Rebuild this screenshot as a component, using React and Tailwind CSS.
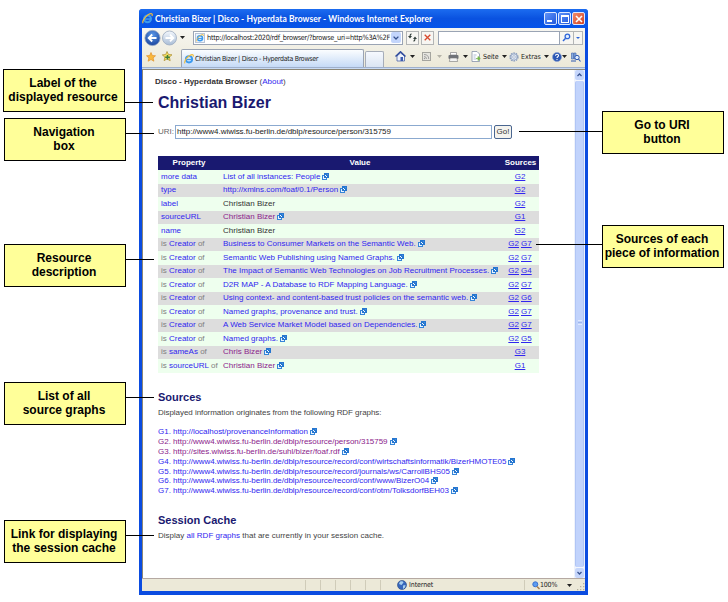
import React from 'react';

const link = 'text-[#3026f0]';
const visited = 'text-[#8b238b]';

function Ext() {
  return (
    <svg className="mb-px ml-[2px] inline-block shrink-0" width="7" height="7" viewBox="0 0 7 7">
      <rect x="0.5" y="2.5" width="4" height="4" fill="#eaf4ff" stroke="#3585d8" />
      <rect x="2.500" y="0.500" width="4" height="4" fill="#fff" stroke="#2576d0" />
      <path d="M3 1.500h2.500V4M5.300 1.700L2.600 4.400" stroke="#2576d0" strokeWidth="1" fill="none" />
    </svg>
  );
}

function Tri({ className = '' }) {
  return (
    <svg className={'shrink-0 ' + className} width="5" height="3" viewBox="0 0 5 3">
      <path d="M0 0h5L2.5 3z" fill="currentColor" />
    </svg>
  );
}

function IELogo({ size = 10 }) {
  return (
    <svg width={size} height={size} viewBox="0 0 12 12" className="shrink-0">
      <circle cx="6" cy="6.4" r="3.8" fill="none" stroke="#3b9af0" strokeWidth="2.200" />
      <path d="M3 6.6h6.8" stroke="#3b9af0" strokeWidth="1.6" />
      <path d="M1.2 11.2C-.8 8.500 6.500 .2 10.500 .8c1 .3.8 1.500.3 2.400" fill="none" stroke="#f2bd3a" strokeWidth="1.300" />
    </svg>
  );
}

function TitleBar() {
  const btn = 'flex h-[13px] w-[13px] items-center justify-center rounded-[2px] border border-[#dce8ff]';
  return (
    <div className="flex h-[19px] items-center rounded-t-[3px] bg-linear-to-b from-[#1c6cf0] via-[#0a52e0] to-[#0654ea] pr-[3px] pl-[3px]">
      <IELogo size={11} />
      <div className="ml-[2px] flex-1 whitespace-nowrap font-['Lato',sans-serif] text-[8.5px] leading-[12px] font-bold tracking-[0.06px] text-white">
        Christian Bizer | Disco - Hyperdata Browser - Windows Internet Explorer
      </div>
      <div className="flex gap-[1px]">
        <div className={btn + ' bg-linear-to-br from-[#5f92f8] to-[#2158dc]'}>
          <div className="mt-[5px] mr-[3px] h-[2px] w-[5px] bg-white" />
        </div>
        <div className={btn + ' bg-linear-to-br from-[#5f92f8] to-[#2158dc]'}>
          <div className="h-[8px] w-[8px] border border-t-2 border-white" />
        </div>
        <div className={btn + ' bg-linear-to-br from-[#ee8a6a] to-[#d4401c]'}>
          <svg width="8" height="8" viewBox="0 0 8 8">
            <path d="M1 1l6 6M7 1L1 7" stroke="#fff" strokeWidth="1.600" />
          </svg>
        </div>
      </div>
    </div>
  );
}

function NavRow() {
  return (
    <div className="flex h-[19px] items-center pl-[2px]">
      <svg width="35" height="18" viewBox="0 0 35 18" className="shrink-0">
        <defs>
          <radialGradient id="back" cx="0.5" cy="0.3" r="0.8">
            <stop offset="0" stopColor="#5b98e8" />
            <stop offset="1" stopColor="#123a94" />
          </radialGradient>
          <linearGradient id="fwd" x1="0" y1="0" x2="0" y2="1">
            <stop offset="0" stopColor="#f4f8fd" />
            <stop offset="1" stopColor="#a9bdd6" />
          </linearGradient>
        </defs>
        <circle cx="8.500" cy="9" r="7.600" fill="url(#back)" stroke="#8fa3c4" strokeWidth="0.8" />
        <path d="M12.500 9H5M8.200 5.500L4.700 9l3.500 3.500" stroke="#fff" strokeWidth="1.900" fill="none" />
        <circle cx="25.500" cy="9" r="7" fill="url(#fwd)" stroke="#9aa9bf" strokeWidth="0.8" />
        <path d="M21.500 9H29M26 5.700L29.300 9 26 12.300" stroke="#fff" strokeWidth="1.900" fill="none" />
      </svg>
      <Tri className="ml-[1px] text-[#222]" />
      <div className="ml-[8px] flex h-[14px] w-[210px] items-center border border-[#9aa4b4] bg-white pr-px pl-[1px]">
        <div className="flex h-[10px] w-[10px] items-center justify-center border border-[#b8c4d6] bg-[#eef4fc]">
          <IELogo size={8} />
        </div>
        <div className="ml-[2px] w-[184px] overflow-hidden whitespace-nowrap font-['DejaVu_Sans_Condensed','DejaVu_Sans',sans-serif] text-[7.3px] leading-[12px] tracking-[-0.28px] text-[#222]">
          http://localhost:2020/rdf_browser/?browse_uri=http%3A%2F
        </div>
        <div className="flex h-[11px] flex-1 items-center justify-center rounded-[2px] bg-[#c3d5fb]">
          <svg width="6" height="4" viewBox="0 0 6 4">
            <path d="M0.600 0.600L3 3 5.400 0.600" stroke="#34508c" strokeWidth="1.300" fill="none" />
          </svg>
        </div>
      </div>
      <div className="ml-[3px] flex h-[14px] w-[13px] items-center justify-center border border-[#b3b5b5] bg-[#f7f6f2]">
        <svg width="9" height="9" viewBox="0 0 9 9">
          <path d="M3.500 0.800C2.200 1 2 2 2 3.500M5.500 8.200C6.800 8 7 7 7 5.500" stroke="#333f3a" strokeWidth="1.200" fill="none" />
          <path d="M0 3h4L2 5.500zM5 6h4L7 3.500z" fill="#333f3a" />
        </svg>
      </div>
      <div className="ml-[2px] flex h-[14px] w-[13px] items-center justify-center border border-[#b3b5b5] bg-[#f7f6f2]">
        <svg width="7" height="7" viewBox="0 0 7 7">
          <path d="M0.700 0.700l5.600 5.600M6.300 0.700L0.700 6.300" stroke="#d8492c" strokeWidth="1.300" />
        </svg>
      </div>
      <div className="ml-[4px] h-[14px] w-[122px] border border-[#9aa4b4] bg-white" />
      <div className="flex h-[14px] w-[14px] items-center justify-center border-y border-r border-[#b3b5b5] bg-[#f7f6f2]">
        <svg width="9" height="9" viewBox="0 0 9 9">
          <circle cx="5.400" cy="3.400" r="2.300" stroke="#2f66d8" strokeWidth="1.300" fill="#e4efff" />
          <path d="M3.600 5.200L1 8" stroke="#2f66d8" strokeWidth="1.500" />
        </svg>
      </div>
      <div className="flex h-[14px] w-[9px] items-center justify-center border-y border-r border-[#b3b5b5] bg-[#f7f6f2] text-[#2f66d8]">
        <svg width="4" height="2" viewBox="0 0 4 2"><path d="M0 0h4L2 2z" fill="currentColor" /></svg>
      </div>
    </div>
  );
}

function TabRow() {
  const ui = "font-['DejaVu_Sans_Condensed','DejaVu_Sans',sans-serif] text-[7px] leading-[10px] whitespace-nowrap text-[#222]";
  return (
    <div className="flex h-[20px] items-end">
      <div className="flex w-[39px] shrink-0 items-center self-start pt-[4px] pl-[4px]">
        <svg width="10" height="10" viewBox="0 0 10 10">
          <path d="M5 0.500l1.300 3 3.200.3-2.400 2.100.8 3.300L5 7.500 2.100 9.200l.8-3.300L.5 3.800l3.200-.3z" fill="#f9b83c" stroke="#e2902a" strokeWidth="0.7" />
        </svg>
        <svg className="ml-[6px]" width="11" height="11" viewBox="0 0 11 11">
          <path d="M5 0.500l1.500 3 3.500.3-2.600 2.300.8 3.600L5 7.900 2.100 9.700l.8-3.600L.3 3.900l3.400-.4z" fill="#f7e060" stroke="#a8892e" strokeWidth="0.7" />
          <path d="M5.500 4v4.500M3.200 6.300h4.600" stroke="#3f7d35" strokeWidth="1.500" />
        </svg>
      </div>
      <div className="flex h-[18px] w-[183px] shrink-0 items-center rounded-t-[2px] border border-b-0 border-[#9aa3b3] bg-linear-to-b from-[#fbfdff] to-[#c5daf6] pl-[2px]">
        <IELogo size={10} />
        <div className={ui + ' ml-px text-[7.2px] tracking-[-0.3px]'}>Christian Bizer | Disco - Hyperdata Browser</div>
      </div>
      <div className="mr-[11px] ml-px h-[16px] w-[19px] shrink-0 rounded-t-[2px] border border-b-0 border-[#a6adb9] bg-linear-to-b from-[#f6f9fe] to-[#dbe5f2]" />
      <div className="flex flex-1 items-center pb-[5px]">
        <svg width="11" height="11" viewBox="0 0 11 11">
          <path d="M2 5v5h7.500V5L5.500 2z" fill="#eef2fa" stroke="#4a63a8" strokeWidth="0.800" />
          <path d="M0.500 5.500L5.500 0.800l5 4.700" stroke="#2f4b9c" strokeWidth="1.500" fill="none" />
          <path d="M5.500 6h2.500v4H5.500z" fill="#3c5cb0" />
        </svg>
        <Tri className="ml-[4px] text-[#222]" />
        <svg className="ml-[7px]" width="9" height="9" viewBox="0 0 9 9">
          <rect x="0.500" y="0.500" width="8" height="8" fill="#e6e5df" stroke="#a5a59f" />
          <path d="M2 4.500q2.500 0 2.500 2.500M2 2.500q4.700 0 4.700 4.500" stroke="#999" fill="none" strokeWidth="0.900" />
          <circle cx="2.500" cy="6.500" r="0.700" fill="#999" />
        </svg>
        <Tri className="ml-[6px] text-[#b4b2a8]" />
        <svg className="ml-[6px]" width="11" height="10" viewBox="0 0 11 10">
          <path d="M2.500 0.500h6V3h-6z" fill="#fff" stroke="#888" strokeWidth="0.700" />
          <rect x="0.500" y="3" width="10" height="4" rx="1" fill="#6f7278" />
          <path d="M2 6h7l.6 3.500H1.400z" fill="#f3f3f3" stroke="#777" strokeWidth="0.600" />
        </svg>
        <Tri className="ml-[4px] text-[#222]" />
        <svg className="ml-[3px]" width="10" height="11" viewBox="0 0 10 11">
          <path d="M1 0.500h5l2.500 2.500v7.500H1z" fill="#fff" stroke="#8792a8" strokeWidth="0.800" />
          <path d="M2.500 4h3M2.500 6h2M2.500 8h3" stroke="#8fa2c4" strokeWidth="0.700" />
          <path d="M5 7.500h3M7 5.500l2.300 2L7 9.500z" fill="#79b84c" stroke="#79b84c" strokeWidth="0.800" />
        </svg>
        <div className={ui + ' ml-[2px] w-[17px] tracking-[-0.1px]'}>Seite</div>
        <Tri className="ml-[2px] text-[#222]" />
        <svg className="ml-[2px]" width="10" height="10" viewBox="0 0 10 10">
          <circle cx="5" cy="5" r="3.900" fill="#e7edf7" stroke="#8a9cba" strokeWidth="1.400" strokeDasharray="1.700 0.750" />
          <circle cx="5" cy="5" r="3" fill="#dde6f4" stroke="#8a9cba" strokeWidth="0.600" />
          <circle cx="5" cy="5" r="1.300" fill="#fff" stroke="#8a9cba" strokeWidth="0.600" />
        </svg>
        <div className={ui + ' ml-[2px] w-[21px] tracking-[0px]'}>Extras</div>
        <Tri className="ml-[2px] text-[#222]" />
        <svg className="ml-[3px]" width="10" height="10" viewBox="0 0 10 10">
          <circle cx="5" cy="5" r="4.500" fill="#2b57b4" stroke="#8ba4d0" strokeWidth="0.700" />
          <path d="M3.500 3.800C3.500 1.700 6.700 1.700 6.500 3.800 6.400 4.800 5 4.800 5 6" stroke="#fff" strokeWidth="1.100" fill="none" />
          <circle cx="5" cy="7.600" r="0.700" fill="#fff" />
        </svg>
        <Tri className="text-[#222]" />
        <svg className="ml-[4px]" width="10" height="10" viewBox="0 0 10 10">
          <path d="M0.500 1h2v6h-2zM3 1h2v6H3z" fill="#8aaee4" stroke="#3d61a8" strokeWidth="0.600" />
          <circle cx="6" cy="5.500" r="2.200" fill="#dcebff" stroke="#2d58b0" />
          <path d="M7.500 7L9.500 9.500M0 9h5" stroke="#2d58b0" strokeWidth="1.100" />
        </svg>
      </div>
    </div>
  );
}

const rows = [
  ['more data', 'p', 'List of all instances: People', 'l', ['G2']],
  ['type', 'p', 'http://xmlns.com/foaf/0.1/Person', 'l', ['G2']],
  ['label', 'p', 'Christian Bizer', 't', ['G2']],
  ['sourceURL', 'p', 'Christian Bizer', 'v', ['G1']],
  ['name', 'p', 'Christian Bizer', 't', ['G2']],
  ['Creator', 'i', 'Business to Consumer Markets on the Semantic Web.', 'l', ['G2', 'G7']],
  ['Creator', 'i', 'Semantic Web Publishing using Named Graphs.', 'l', ['G2', 'G7']],
  ['Creator', 'i', 'The Impact of Semantic Web Technologies on Job Recruitment Processes.', 'l', ['G2', 'G4']],
  ['Creator', 'i', 'D2R MAP - A Database to RDF Mapping Language.', 'l', ['G2', 'G7']],
  ['Creator', 'i', 'Using context- and content-based trust policies on the semantic web.', 'l', ['G2', 'G6']],
  ['Creator', 'i', 'Named graphs, provenance and trust.', 'l', ['G2', 'G7']],
  ['Creator', 'i', 'A Web Service Market Model based on Dependencies.', 'l', ['G2', 'G7']],
  ['Creator', 'i', 'Named graphs.', 'l', ['G2', 'G5']],
  ['sameAs', 'i', 'Chris Bizer', 'v', ['G3']],
  ['sourceURL', 'i', 'Christian Bizer', 'v', ['G1']],
];

const tone = { l: link, v: visited, t: 'text-[#333]' };

function PropertyTable() {
  const grid = 'grid grid-cols-[63px_281px_37px] items-center';
  return (
    <div className="mt-[17px] w-[381px] text-[8px]">
      <div className={grid + ' h-[14px] bg-[#191970] text-center font-bold text-white'}>
        <div className="pr-px">Property</div>
        <div className="pr-[3px]">Value</div>
        <div>Sources</div>
      </div>
      {rows.map(([prop, kind, value, t, src], i) => (
        <div key={i} className={grid + ' h-[13.500px] whitespace-nowrap ' + (i % 2 ? 'bg-[#dddddd]' : 'bg-[#eeffee]')}>
          <div className="pl-[3px] text-[#808080]">
            {kind === 'i' && 'is '}
            <span className={link}>{prop}</span>
            {kind === 'i' && ' of'}
          </div>
          <div className={'flex items-center pl-[2px] tracking-[0.015px] ' + tone[t]}>
            <span>{value}</span>
            {t !== 't' && <Ext />}
          </div>
          <div className={'flex justify-center gap-[2px] pr-[1px] underline ' + link}>
            {src.map((s) => <span key={s}>{s}</span>)}
          </div>
        </div>
      ))}
    </div>
  );
}

const graphs = [
  ['http://localhost/provenanceInformation', 0],
  ['http://www4.wiwiss.fu-berlin.de/dblp/resource/person/315759', 1],
  ['http://sites.wiwiss.fu-berlin.de/suhl/bizer/foaf.rdf', 1],
  ['http://www4.wiwiss.fu-berlin.de/dblp/resource/record/conf/wirtschaftsinformatik/BizerHMOTE05', 0],
  ['http://www4.wiwiss.fu-berlin.de/dblp/resource/record/journals/ws/CarrollBHS05', 0],
  ['http://www4.wiwiss.fu-berlin.de/dblp/resource/record/conf/www/BizerO04', 0],
  ['http://www4.wiwiss.fu-berlin.de/dblp/resource/record/conf/otm/TolksdorfBEH03', 0],
];

function Page() {
  return (
    <div className="min-w-0 flex-1 overflow-hidden bg-white pt-[7px] pl-[15px] text-[8px] leading-[10px] whitespace-nowrap text-[#444]">
      <div className="-ml-[3px] text-[8px]">
        <b className="text-[#333]">Disco - Hyperdata Browser</b> (<span className={link}>About</span>)
      </div>
      <h1 className="mt-[6px] text-[16px] leading-[20px] font-bold text-[#191970]">Christian Bizer</h1>
      <div className="mt-[11px] flex h-[15px] items-center">
        <span className="w-[17px] text-[#666]">URI:</span>
        <div className="flex h-[14px] w-[317px] items-center border border-[#8ba9cf] bg-white pl-[1px] text-[#222] tracking-[-0.03px]">
          http://www4.wiwiss.fu-berlin.de/dblp/resource/person/315759
        </div>
        <div className="ml-[2px] flex h-[14px] w-[18px] items-center justify-center rounded-[2px] border border-[#4a6690] bg-[#f4f3ee] text-[#333]">
          Go!
        </div>
      </div>
      <PropertyTable />
      <h2 className="mt-[17px] text-[11px] leading-[14px] font-bold text-[#191970]">Sources</h2>
      <p className="mt-[4px] tracking-[-0.045px]">Displayed information originates from the following RDF graphs:</p>
      <div className="mt-[10px] tracking-[-0.02px]">
        {graphs.map(([url, seen], i) => (
          <div key={url} className={'flex h-[9.800px] items-center ' + (seen ? visited : link)}>
            <span>G{i + 1}. {url}</span>
            <Ext />
          </div>
        ))}
      </div>
      <h2 className="mt-[17px] text-[11px] leading-[14px] font-bold text-[#191970]">Session Cache</h2>
      <p className="mt-[4px] tracking-[0.01px]">
        Display <span className={link}>all RDF graphs</span> that are currently in your session cache.
      </p>
    </div>
  );
}

function ScrollBar() {
  const arrow = 'flex h-[10px] items-center justify-center rounded-[2px] bg-[#c6d6fb]';
  return (
    <div className="flex w-[11px] shrink-0 flex-col border-x border-[#eef2fb] bg-[#f3f6fd]">
      <div className={arrow}>
        <svg width="5" height="4" viewBox="0 0 5 4"><path d="M0.500 3L2.500 1l2 2" stroke="#3a5590" strokeWidth="1.300" fill="none" /></svg>
      </div>
      <div className="my-px flex flex-1 flex-col items-center rounded-[2px] border-x border-[#b0c5f5] bg-[#c1d3fc] pt-[239px]">
        <div className="flex flex-col gap-px">
          <div className="h-px w-[4px] bg-[#dfe9ff]" />
          <div className="h-px w-[4px] bg-[#9eb7ee]" />
          <div className="h-px w-[4px] bg-[#dfe9ff]" />
        </div>
      </div>
      <div className={arrow}>
        <svg width="5" height="4" viewBox="0 0 5 4"><path d="M0.500 1L2.500 3l2-2" stroke="#3a5590" strokeWidth="1.300" fill="none" /></svg>
      </div>
    </div>
  );
}

function StatusBar() {
  return (
    <div className="flex h-[13px] items-center border-t border-[#b5a9a2] bg-[#ece9d8] font-['DejaVu_Sans_Condensed','DejaVu_Sans',sans-serif] text-[7px] leading-[10px] text-[#222]">
      <div className="flex w-[250px] justify-end gap-[14px] pr-[11px]">
        {[0, 1, 2, 3, 4, 5].map((n) => (
          <div key={n} className="h-[10px] w-px bg-[#d0ccb9]" />
        ))}
      </div>
      <svg className="ml-[5px]" width="10" height="10" viewBox="0 0 10 10">
        <circle cx="5" cy="5" r="4.500" fill="#3767bd" stroke="#28467f" strokeWidth="0.600" />
        <path d="M3 1.500q3-1 3.500 1L4.500 5 2 4zM6 5.500l2.500-.5-.5 2.500-2 1.500z" fill="#a8cfef" />
      </svg>
      <span className="ml-[2px] w-[27px] tracking-[-0.1px]">Internet</span>
      <div className="ml-[88px] h-[10px] w-px bg-[#d0ccb9]" />
      <svg className="ml-[7px]" width="8" height="9" viewBox="0 0 8 9">
        <circle cx="3.300" cy="3.300" r="2.500" fill="#5c9cf0" stroke="#3a70d0" />
        <path d="M5 5.500L7.500 8" stroke="#a57b4c" strokeWidth="1.400" />
      </svg>
      <span className="w-[19px] tracking-[-0.2px]">100%</span>
      <Tri className="ml-[8px] text-[#222]" />
      <svg className="mt-[3px] ml-auto" width="8" height="8" viewBox="0 0 8 8">
        <path d="M6 0h1.300v1.300H6zM3 3h1.300v1.300H3zM6 3h1.300v1.300H6zM0 6h1.300v1.300H0zM3 6h1.300v1.300H3zM6 6h1.300v1.300H6z" fill="#b5b19f" />
      </svg>
    </div>
  );
}

function Callout({ box, line, children }) {
  return (
    <>
      <div className={'absolute h-px bg-black ' + line} />
      <div className={'absolute flex h-[43px] w-[122px] items-center justify-center border border-black bg-[#ffff99] pr-[2px] pb-[2px] text-center text-[12px] leading-[14px] font-bold whitespace-nowrap text-black ' + box}>
        <div>{children}</div>
      </div>
    </>
  );
}

export default function App() {
  return (
    <div className="relative h-[602px] w-[728px] overflow-hidden bg-white pt-[9px] pl-[139px] font-['Liberation_Sans',Arial,sans-serif]">
      <div className="flex h-[586px] w-[449px] flex-col rounded-t-[4px] bg-[#0b4ce0]">
        <TitleBar />
        <div className="mx-[3px] mb-[4px] flex min-h-0 flex-1 flex-col">
          <div className="h-[39px] bg-linear-to-b from-[#f7f6f1] to-[#ece9d8]">
            <NavRow />
            <TabRow />
          </div>
          <div className="h-[3px] border-y border-t-[#9fb0cc] border-b-[#8c8776] bg-[#c9dbf4]" />
          <div className="flex min-h-0 flex-1 border-l border-[#8c8776]">
            <Page />
            <ScrollBar />
          </div>
          <StatusBar />
        </div>
      </div>

      <Callout box="left-[3px] top-[69px]" line="left-[125px] top-[102px] w-[28px]">Label of the<br />displayed resource</Callout>
      <Callout box="left-[4px] top-[118px]" line="left-[126px] top-[133px] w-[28px]">Navigation<br />box</Callout>
      <Callout box="left-[4px] top-[244px]" line="left-[126px] top-[259px] w-[28px]">Resource<br />description</Callout>
      <Callout box="left-[4px] top-[382px]" line="left-[126px] top-[397px] w-[28px]">List of all<br />source graphs</Callout>
      <Callout box="left-[4px] top-[520px]" line="left-[126px] top-[535px] w-[28px]">Link for displaying<br />the session cache</Callout>
      <Callout box="left-[602px] top-[111px]" line="left-[519px] top-[131px] w-[83px]">Go to URI<br />button</Callout>
      <Callout box="left-[602px] top-[225px]" line="left-[536px] top-[244px] w-[66px]">Sources of each<br />piece of information</Callout>
    </div>
  );
}
